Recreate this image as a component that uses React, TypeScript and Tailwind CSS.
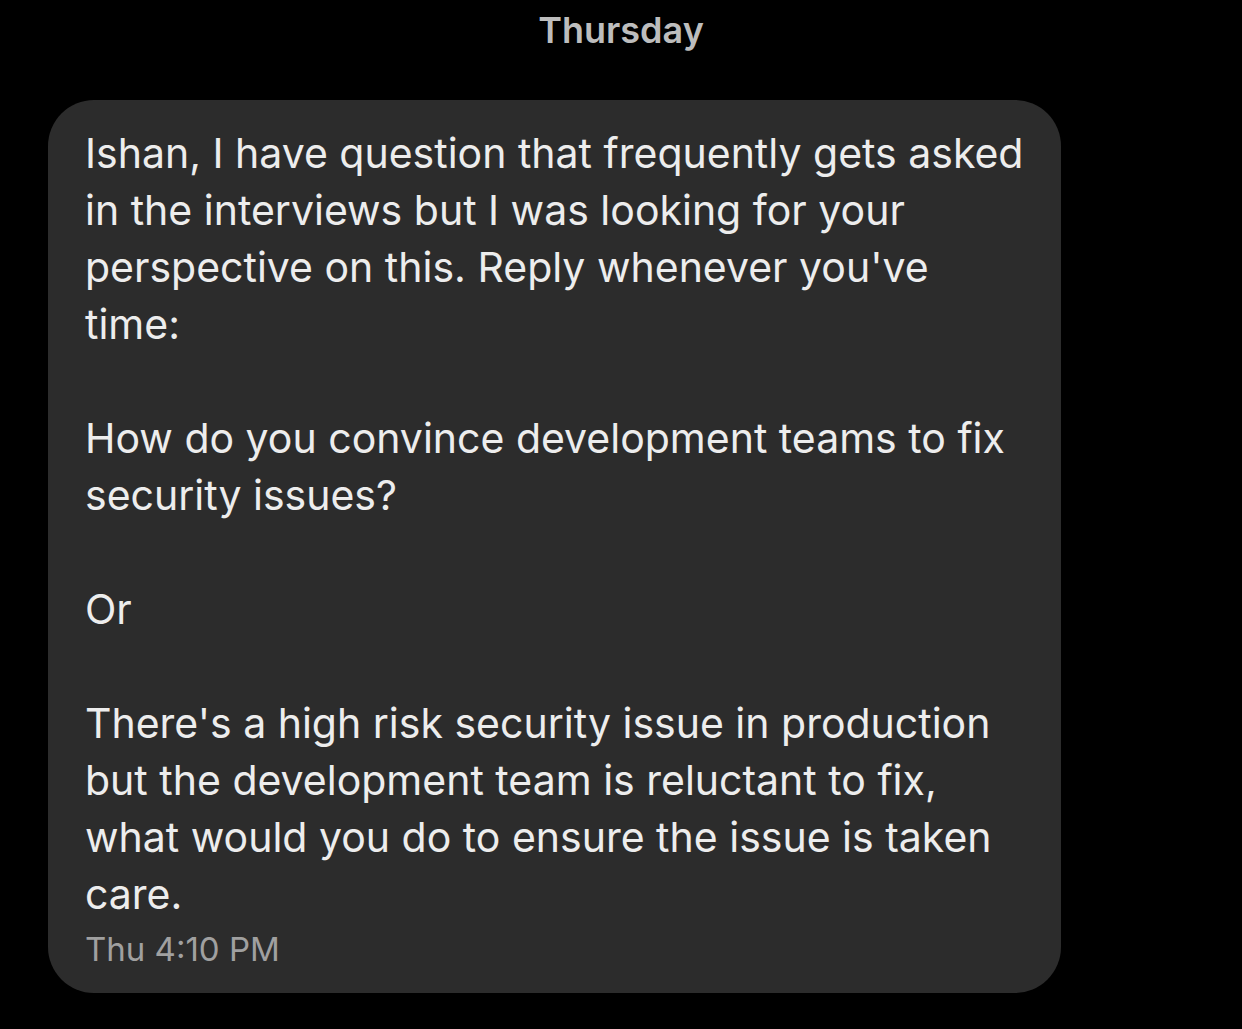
export default function App() {
  const lines: string[] = [
    "Ishan, I have question that frequently gets asked",
    "in the interviews but I was looking for your",
    "perspective on this. Reply whenever you've",
    "time:",
    "",
    "How do you convince development teams to fix",
    "security issues?",
    "",
    "Or",
    "",
    "There's a high risk security issue in production",
    "but the development team is reluctant to fix,",
    "what would you do to ensure the issue is taken",
    "care.",
  ];
  return (
    <div className="w-[1242px] h-[1029px] bg-black overflow-hidden" style={{ fontFamily: "Inter, 'Noto Sans', sans-serif" }}>
      <div className="h-[60px] flex items-center justify-center text-[#bdbdbd] text-[36px] font-semibold">Thursday</div>
      <div className="mt-[40px] ml-[48px] w-[1013px] h-[893px] bg-[#2c2c2c] rounded-[46px] pl-[37px] pt-[25px]">
        {lines.map((l, i) => (
          <div key={i} className="h-[57px] leading-[57px] text-[41px] text-[#ededed] whitespace-nowrap">{l || "\u00a0"}</div>
        ))}
        <div className="h-[40px] leading-[40px] text-[33px] text-[#a0a0a0] mt-[6px]">Thu 4:10 PM</div>
      </div>
    </div>
  );
}
